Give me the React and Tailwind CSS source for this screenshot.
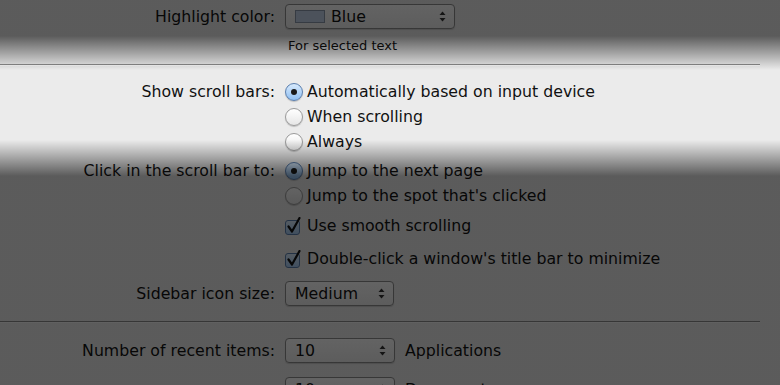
import React from 'react';

const font = { fontFamily: '"DejaVu Sans", "Liberation Sans", sans-serif' };

function Arrows() {
  return (
    <svg width="7" height="11" viewBox="0 0 7 11" className="shrink-0">
      <path d="M3.5 0.5 L6.5 4 L0.5 4 Z" fill="#333" />
      <path d="M3.5 10.5 L6.5 7 L0.5 7 Z" fill="#333" />
    </svg>
  );
}

function Popup({ width, children }) {
  return (
    <div
      className="h-[25px] flex items-center justify-between pl-[9px] pr-[8px] rounded-[4px] border border-[#8e8e8e] bg-gradient-to-b from-white to-[#eeeeee] shadow-[0_1px_1px_rgba(0,0,0,0.15)]"
      style={{ width }}
    >
      <div className="flex items-center gap-[6px]">{children}</div>
      <Arrows />
    </div>
  );
}

function Radio({ checked }) {
  return (
    <div
      className={
        'w-[18px] h-[18px] rounded-full border shrink-0 flex items-center justify-center shadow-[0_1px_1px_rgba(0,0,0,0.2)] ' +
        (checked
          ? 'border-[#5b7fae] bg-gradient-to-b from-[#d8eafc] to-[#8fbff2]'
          : 'border-[#9a9a9a] bg-gradient-to-b from-white to-[#e6e6e6]')
      }
    >
      {checked && <div className="w-[6px] h-[6px] rounded-full bg-[#1a1a1a]" />}
    </div>
  );
}

function Check() {
  return (
    <div className="relative w-[16px] h-[16px] shrink-0">
      <div className="absolute left-0 top-[2px] w-[15px] h-[15px] rounded-[3px] border border-[#5b7fae] bg-gradient-to-b from-[#d8eafc] to-[#a6cbf3]" />
      <svg width="16" height="18" viewBox="0 0 16 18" className="absolute left-[1px] top-[-1px]">
        <path d="M2.5 9.5 L6 14.5 L13.5 1" fill="none" stroke="#111" strokeWidth="2.2" strokeLinecap="round" strokeLinejoin="round" />
      </svg>
    </div>
  );
}

function Row({ label, className = '', children }) {
  return (
    <div className={'flex items-center ' + className}>
      <div className="w-[277px] text-right pr-[2px] shrink-0">{label}</div>
      <div className="pl-[8px] flex items-center gap-[4px]">{children}</div>
    </div>
  );
}

export default function App() {
  return (
    <div
      className="relative w-[780px] h-[385px] overflow-hidden bg-[#ebebeb] text-[15.75px] text-[#111] leading-none"
      style={font}
    >
      <div className="flex flex-col">
        {/* Highlight */}
        <Row label="Highlight color:" className="mt-[4px] h-[25px]">
          <Popup width={170}>
            <div className="w-[30px] h-[13px] border border-[#8a97ab] bg-[#c3d2ea]" />
            <span>Blue</span>
          </Popup>
        </Row>
        <div className="mt-[8px] h-[16px] flex items-center pl-[288px] text-[13px]">For selected text</div>

        <div className="mt-[11px] w-[760px] h-[1px] bg-[#8c8c8c]" />
        <div className="w-[760px] h-[1px] bg-[#f8f8f8]" />

        {/* scroll bars */}
        <Row label="Show scroll bars:" className="mt-[14px] h-[24px]">
          <Radio checked />
          <span>Automatically based on input device</span>
        </Row>
        <Row label="" className="mt-[1px] h-[24px]">
          <Radio />
          <span>When scrolling</span>
        </Row>
        <Row label="" className="mt-[1px] h-[24px]">
          <Radio />
          <span>Always</span>
        </Row>

        <Row label="Click in the scroll bar to:" className="mt-[5px] h-[24px]">
          <Radio checked />
          <span>Jump to the next page</span>
        </Row>
        <Row label="" className="mt-[1px] h-[24px]">
          <Radio />
          <span>Jump to the spot that's clicked</span>
        </Row>
        <Row label="" className="mt-[6px] h-[24px]">
          <Check />
          <span className="ml-[2px]">Use smooth scrolling</span>
        </Row>
        <Row label="" className="mt-[9px] h-[24px]">
          <Check />
          <span className="ml-[2px]">Double-click a window's title bar to minimize</span>
        </Row>

        <Row label="Sidebar icon size:" className="mt-[10px] h-[25px]">
          <Popup width={109}>
            <span>Medium</span>
          </Popup>
        </Row>

        <div className="mt-[15px] w-[760px] h-[1px] bg-[#8c8c8c]" />
        <div className="w-[760px] h-[1px] bg-[#f8f8f8]" />

        <Row label="Number of recent items:" className="mt-[15px] h-[25px]">
          <Popup width={110}>
            <span>10</span>
          </Popup>
          <span className="ml-[6px]">Applications</span>
        </Row>
        <Row label="" className="mt-[14px] h-[25px]">
          <Popup width={110}>
            <span>10</span>
          </Popup>
          <span className="ml-[6px]">Documents</span>
        </Row>
      </div>

      {/* spotlight overlay */}
      <div className="absolute inset-0 pointer-events-none bg-[linear-gradient(to_bottom,rgba(0,0,0,0.61)_0px,rgba(0,0,0,0.61)_36px,rgba(0,0,0,0)_70px,rgba(0,0,0,0)_140px,rgba(0,0,0,0.61)_176px,rgba(0,0,0,0.61)_100%)]" />
    </div>
  );
}
